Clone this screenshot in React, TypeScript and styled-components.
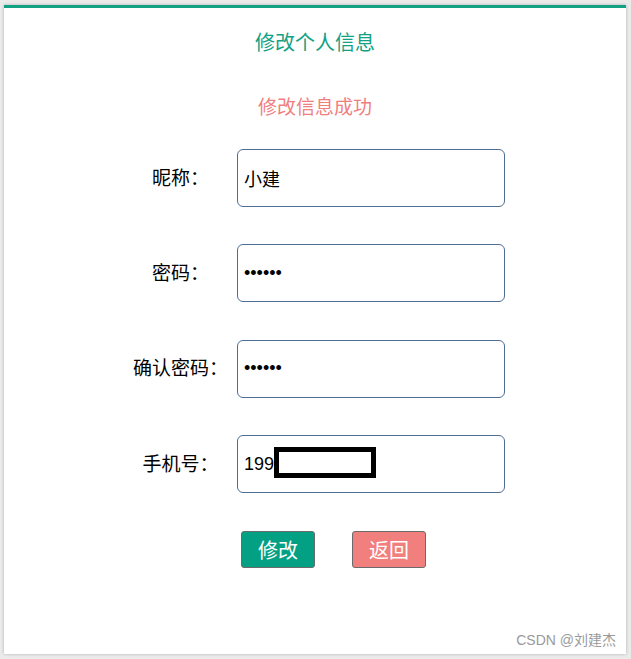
import React from "react";
import styled, { createGlobalStyle } from "styled-components";

const GlobalStyle = createGlobalStyle`
  html, body {
    margin: 0;
    padding: 0;
    background: #ebebeb;
  }
  body {
    font-family: "Liberation Sans", "Noto Sans CJK SC", sans-serif;
  }
`;

const fields = [
  { label: "昵称：", value: "小建", type: "text" },
  { label: "密码：", value: "123456", type: "password" },
  { label: "确认密码：", value: "123456", type: "password" },
  { label: "手机号：", value: "199", type: "text", redacted: true },
];

const App = () => {
  return (
    <>
      <GlobalStyle />
      <Page>
        <Card>
          <Title>修改个人信息</Title>
          <Message>修改信息成功</Message>
          <Form>
            {fields.map((f) => (
              <Row key={f.label}>
                <Label>{f.label}</Label>
                <Field>
                  <Input type={f.type} value={f.value} readOnly />
                  {f.redacted && <Redaction />}
                </Field>
              </Row>
            ))}
            <ButtonRow>
              <Button $bg="#03a084">修改</Button>
              <Button $bg="#f07f7e">返回</Button>
            </ButtonRow>
          </Form>
          <Watermark>CSDN @刘建杰</Watermark>
        </Card>
      </Page>
    </>
  );
};

export default App;

const Page = styled.div`
  padding: 5px 5px 5px 4px;
  height: 659px;
  box-sizing: border-box;
`;

const Card = styled.div`
  position: relative;
  height: 649px;
  box-sizing: border-box;
  background: #fff;
  border-top: 3px solid #13a184;
  box-shadow: 0 0 3px rgba(0, 0, 0, 0.25);
  padding-top: 20px;
  font-family: "Microsoft YaHei", "Noto Sans CJK SC", sans-serif;
`;

const Title = styled.div`
  text-align: center;
  color: #13a184;
  font-size: 20px;
  line-height: 28px;
`;

const Message = styled.div`
  margin-top: 36px;
  text-align: center;
  color: #f08080;
  font-size: 19px;
  line-height: 28px;
`;

const Form = styled.div`
  width: 380px;
  margin: 29px auto 0;
  display: flex;
  flex-direction: column;
  gap: 37.4px;
`;

const Row = styled.div`
  display: flex;
  align-items: center;
  gap: 1px;
`;

const Label = styled.div`
  width: 111px;
  padding-bottom: 4px;
  white-space: nowrap;
  text-align: center;
  font-size: 19px;
  color: #000;
`;

const Field = styled.div`
  position: relative;
`;

const Input = styled.input`
  display: block;
  width: 268px;
  height: 58px;
  box-sizing: border-box;
  border: 1px solid #4f6d93;
  border-radius: 6px;
  padding: 0 6px;
  font-size: 18px;
  font-family: "Liberation Sans", "Noto Sans CJK SC", sans-serif;
  color: #000;
  outline: none;
`;

const Redaction = styled.div`
  position: absolute;
  left: 37px;
  top: 12px;
  width: 102px;
  height: 31px;
  box-sizing: border-box;
  border: 5px solid #000;
  background: #fff;
`;

const ButtonRow = styled.div`
  display: flex;
  gap: 37px;
  padding-left: 116px;
`;

const Button = styled.button<{ $bg: string }>`
  width: 74px;
  height: 37px;
  box-sizing: border-box;
  background: ${(p) => p.$bg};
  border: 1px solid #6b6b6b;
  border-radius: 3px;
  color: #fff;
  font-size: 20px;
  font-family: "Microsoft YaHei", "Noto Sans CJK SC", sans-serif;
  padding: 0;
`;

const Watermark = styled.div`
  position: absolute;
  right: 10px;
  bottom: 5px;
  font-size: 14px;
  color: #9a9a9a;
  font-family: "Liberation Sans", "Noto Sans CJK SC", sans-serif;
`;
